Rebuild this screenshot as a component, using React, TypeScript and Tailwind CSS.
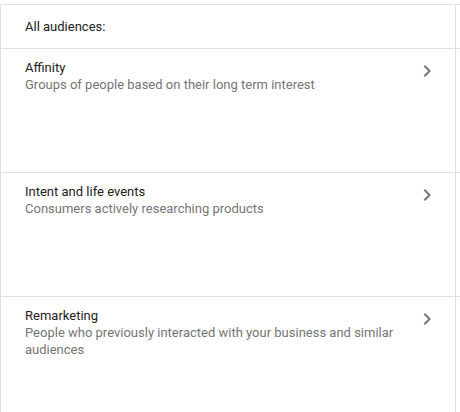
import React from 'react'

type Audience = { title: string; desc: string }

const audiences: Audience[] = [
  { title: 'Affinity', desc: 'Groups of people based on their long term interest' },
  { title: 'Intent and life events', desc: 'Consumers actively researching products' },
  { title: 'Remarketing', desc: 'People who previously interacted with your business and similar audiences' },
]

function ChevronRight() {
  return (
    <svg width="24" height="24" viewBox="0 0 24 24" className="shrink-0 fill-[#757575]">
      <path d="M10 6L8.59 7.41 13.17 12l-4.58 4.59L10 18l6-6z" />
    </svg>
  )
}

export default function App() {
  return (
    <div className="w-[460px] h-[412px] overflow-hidden bg-white pt-1 font-['Roboto',sans-serif] text-[13px]">
      <div className="border-t border-[#e0e0e0]">
        <div className="flex border-b border-[#e0e0e0]">
          <div className="w-[456px] h-[43px] border-x border-[#e0e0e0] flex items-center pl-6 text-[#212121]">
            All audiences:
          </div>
        </div>
        {audiences.map(a => (
          <div key={a.title} className="flex border-b border-[#e0e0e0]">
            <div className="w-[456px] h-[123px] border-x border-[#e0e0e0] flex items-start justify-between pl-6 pr-4 pt-[11px]">
              <div className="w-[380px] leading-4">
                <div className="text-[#212121]">{a.title}</div>
                <div className="text-[#757575] leading-[16.5px] mt-px">{a.desc}</div>
              </div>
              <div className="-mt-px">
                <ChevronRight />
              </div>
            </div>
          </div>
        ))}
      </div>
    </div>
  )
}
